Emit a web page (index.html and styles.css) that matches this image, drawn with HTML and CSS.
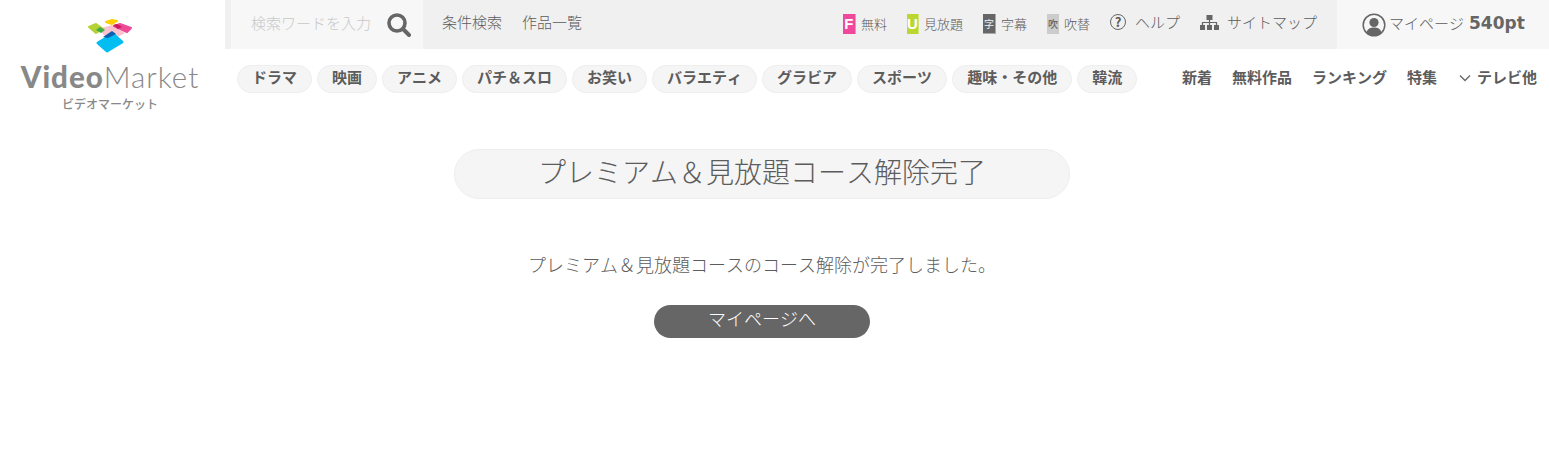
FILE: index.html
```html
<!DOCTYPE html>
<html lang="ja">
<head>
    <meta charset="UTF-8">
    <meta name="viewport" content="width=device-width, initial-scale=1.0">
    <title>プレミアム＆見放題コース解除完了</title>
    <link rel="stylesheet" href="styles.css">
</head>
<body>
    <header class="header">
        <a class="logo" href="#">
            <svg class="logo-mark" viewBox="85 17 50 38" width="50" height="38">
                <polygon points="98,29 112,25 125,33 110,41" fill="#f9c4cf"/>
                <polygon points="89,27 96,24 103,29 96,33" fill="#b5d233" stroke="#b5d233" stroke-width="2" stroke-linejoin="round"/>
                <polygon points="106,22 112,20 117,21 112,24" fill="#fcd000" stroke="#fcd000" stroke-width="2" stroke-linejoin="round"/>
                <polygon points="114,26 120,24 131,28 127,32" fill="#ee4a96" stroke="#ee4a96" stroke-width="2" stroke-linejoin="round"/>
                <polygon points="113,25 117,24 122,27 118,29" fill="#c8195f"/>
                <polygon points="96,30 100,27 105,30 101,33" fill="#3fae49"/>
                <polygon points="98,43 113,34 122,42 107,51" fill="#00bdf2" stroke="#00bdf2" stroke-width="3" stroke-linejoin="round"/>
                <polygon points="103,37 112,31 116,34 108,38" fill="#0b5fb0"/>
            </svg>
            <div class="logo-name"><b>Video</b>Market</div>
            <div class="logo-kana">ビデオマーケット</div>
        </a>
        <div class="header-main">
            <div class="top-bar">
                <div class="search">
                    <span class="search-text">検索ワードを入力</span>
                    <svg class="search-icon" viewBox="0 0 24 24" width="24" height="24">
                        <circle cx="10" cy="10" r="8" fill="none" stroke="#666" stroke-width="3.6"/>
                        <line x1="16" y1="16" x2="22" y2="22" stroke="#666" stroke-width="4" stroke-linecap="round"/>
                    </svg>
                </div>
                <a class="top-link" href="#">条件検索</a>
                <a class="top-link" href="#">作品一覧</a>
                <div class="top-right">
                    <a class="tag-link" href="#"><span class="badge badge-free">F</span>無料</a>
                    <a class="tag-link" href="#"><span class="badge badge-unlimited">U</span>見放題</a>
                    <a class="tag-link" href="#"><span class="badge badge-sub">字</span>字幕</a>
                    <a class="tag-link" href="#"><span class="badge badge-dub">吹</span>吹替</a>
                    <a class="help-link" href="#"><span class="help-icon">?</span>ヘルプ</a>
                    <a class="help-link" href="#">
                        <svg class="map-icon" viewBox="0 0 19 15" width="19" height="15">
                            <rect x="6.5" y="0" width="6" height="5" fill="#666"/>
                            <rect x="0" y="10" width="5" height="5" fill="#666"/>
                            <rect x="7" y="10" width="5" height="5" fill="#666"/>
                            <rect x="14" y="10" width="5" height="5" fill="#666"/>
                            <path d="M9.5 5v5M2.5 10V7.5h14V10" fill="none" stroke="#666" stroke-width="1.2"/>
                        </svg>サイトマップ
                    </a>
                </div>
                <a class="mypage" href="#">
                    <svg class="user-icon" viewBox="0 0 24 24" width="24" height="24">
                        <circle cx="12" cy="12" r="10.8" fill="none" stroke="#666" stroke-width="1.5"/>
                        <circle cx="12" cy="9.5" r="4.6" fill="#666"/>
                        <path d="M4.5 19.5c1-4 4-5 7.500-5s6.500 1 7.500 5a10.500 10.500 0 0 1-15 0z" fill="#666"/>
                    </svg>
                    <span>マイページ</span>
                    <b class="points">540pt</b>
                </a>
            </div>
            <nav class="nav">
                <div class="genres">
                    <a class="genre" href="#">ドラマ</a>
                    <a class="genre" href="#">映画</a>
                    <a class="genre" href="#">アニメ</a>
                    <a class="genre" href="#">パチ＆スロ</a>
                    <a class="genre" href="#">お笑い</a>
                    <a class="genre" href="#">バラエティ</a>
                    <a class="genre" href="#">グラビア</a>
                    <a class="genre" href="#">スポーツ</a>
                    <a class="genre" href="#">趣味・その他</a>
                    <a class="genre" href="#">韓流</a>
                </div>
                <div class="sections">
                    <a href="#">新着</a>
                    <a href="#">無料作品</a>
                    <a href="#">ランキング</a>
                    <a href="#">特集</a>
                    <a class="more" href="#"><svg viewBox="0 0 12 8" width="12" height="8"><path d="M1 1.500l5 5 5-5" fill="none" stroke="#666" stroke-width="1.300"/></svg>テレビ他</a>
                </div>
            </nav>
        </div>
    </header>

    <main class="content">
        <h1 class="page-title">プレミアム＆見放題コース解除完了</h1>
        <p class="message">プレミアム＆見放題コースのコース解除が完了しました。</p>
        <a class="btn" href="#">マイページへ</a>
    </main>
</body>
</html>
```

FILE: styles.css
```css
body {
    margin: 0;
    font-family: "Noto Sans CJK JP", "Noto Sans", sans-serif;
    font-weight: 300;
    font-kerning: none;
    color: #5c5c5c;
    background: #fff;
}

a {
    color: inherit;
    text-decoration: none;
}

/* header */
.header {
    display: flex;
    height: 122px;
}

.logo {
    display: flex;
    flex-direction: column;
    align-items: center;
    width: 225px;
    flex-shrink: 0;
    padding: 17px 5px 0 0;
    box-sizing: border-box;
    color: #888;
}

.logo-mark {
    display: block;
}

.logo-name {
    margin-top: 6px;
    font-family: "Lato", sans-serif;
    font-size: 29.5px;
    font-weight: 300;
    font-kerning: normal;
    letter-spacing: 1px;
    line-height: 32px;
    white-space: nowrap;
}

.logo-name b {
    font-weight: 900;
}

.logo-kana {
    margin-top: 3px;
    font-size: 12px;
    font-weight: 500;
    line-height: 15px;
    white-space: nowrap;
}

.header-main {
    flex: 1;
    min-width: 0;
}

/* top bar */
.top-bar {
    display: flex;
    align-items: center;
    height: 49px;
    background: #f0f0f0;
    font-size: 15px;
}

.search {
    display: flex;
    align-items: center;
    justify-content: space-between;
    width: 192px;
    height: 100%;
    margin-left: 6px;
    padding: 0 12px 0 20px;
    box-sizing: border-box;
    background: #f7f7f7;
}

.search-text {
    color: #c8c8c8;
    line-height: 20px;
    margin-top: -3px;
}

.search-icon {
    display: block;
}

.top-link {
    margin-left: 20px;
    line-height: 20px;
    margin-top: -5px;
}

.search + .top-link {
    margin-left: 19px;
}

.top-right {
    display: flex;
    align-items: center;
    margin-left: auto;
    margin-right: 20px;
    gap: 20px;
}

.tag-link {
    display: flex;
    align-items: center;
    font-size: 13px;
    line-height: 20px;
    margin-top: -1px;
}

.badge {
    display: block;
    width: 13px;
    height: 20px;
    margin-right: 5px;
    box-sizing: border-box;
    font-family: "Liberation Sans", sans-serif;
    font-size: 15px;
    font-weight: 700;
    line-height: 20px;
    text-align: center;
    color: #fff;
}

.badge-free {
    background: #f0489b;
    border-right: 1px solid #f78cc0;
}

.badge-unlimited {
    width: 12px;
    background: #bcd630;
    border-right: 1px solid #d2e47a;
}

.badge-sub {
    background: #666;
    border-right: 1px solid #aaa;
    border-bottom: 1px solid #aaa;
    color: #ddd;
    font-family: "Noto Sans CJK JP", sans-serif;
    font-size: 10px;
    font-weight: 500;
}

.badge-dub {
    width: 12px;
    background: #ccc;
    color: #666;
    font-family: "Noto Sans CJK JP", sans-serif;
    font-size: 10px;
    font-weight: 500;
}

.help-link {
    display: flex;
    align-items: center;
    line-height: 20px;
    margin-top: -5px;
}

.help-icon {
    width: 16px;
    height: 16px;
    margin-right: 9px;
    box-sizing: border-box;
    border: 1.5px solid #666;
    border-radius: 50%;
    font-size: 13px;
    font-weight: 700;
    line-height: 13px;
    text-align: center;
}

.map-icon {
    margin-right: 8px;
    display: block;
}

.mypage {
    display: flex;
    align-items: center;
    width: 212px;
    height: 100%;
    padding-left: 25px;
    box-sizing: border-box;
    background: #f7f7f7;
    line-height: 20px;
}

.mypage span {
    margin-top: -3px;
}

.user-icon {
    display: block;
    margin-right: 3px;
}

.points {
    margin-left: 5px;
    margin-top: -3px;
    font-family: "DejaVu Sans", sans-serif;
    font-size: 17px;
    font-weight: 700;
    color: #666;
}

/* nav */
.nav {
    display: flex;
    justify-content: space-between;
    margin-top: 16px;
    padding: 0 12px;
    font-size: 15px;
    font-weight: 700;
}

.genres {
    display: flex;
    gap: 5px;
}

.genre {
    height: 28px;
    padding: 0 14px;
    box-sizing: border-box;
    border: 1px solid #eee;
    border-radius: 14px;
    background: #f5f5f5;
    line-height: 22px;
    white-space: nowrap;
}

.sections {
    display: flex;
    gap: 20px;
    padding-top: 1px;
    line-height: 22px;
    white-space: nowrap;
}

.more {
    margin-left: 2px;
}

.more svg {
    margin-right: 6px;
    vertical-align: 1px;
}

/* content */
.content {
    display: flex;
    flex-direction: column;
    align-items: center;
    padding: 27px 25px 0 0;
}

.page-title {
    width: 616px;
    height: 50px;
    margin: 0;
    box-sizing: border-box;
    border: 1px solid #eee;
    border-radius: 25px;
    background: #f5f5f5;
    font-size: 28px;
    font-weight: 300;
    line-height: 42px;
    text-align: center;
}

.message {
    margin: 52px 0 0;
    font-size: 18px;
    line-height: 26px;
}

.btn {
    display: block;
    width: 216px;
    height: 33px;
    margin-top: 28px;
    border-radius: 17px;
    background: #666;
    color: #fff;
    font-size: 18px;
    line-height: 26px;
    text-align: center;
}
```
